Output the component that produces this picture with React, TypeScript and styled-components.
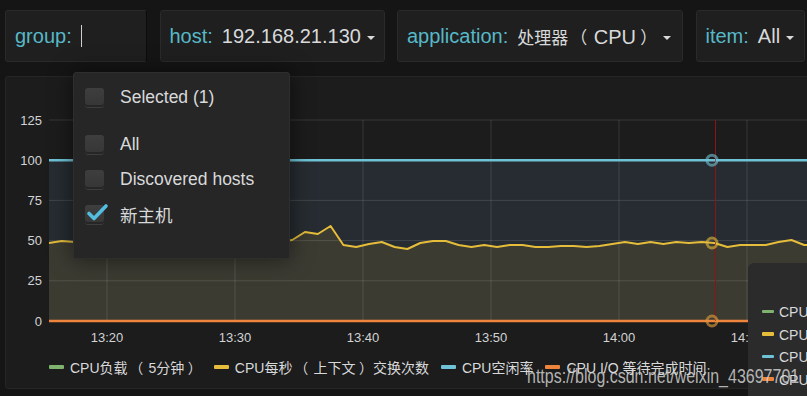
import React from 'react';
import styled, { createGlobalStyle } from 'styled-components';

const GlobalStyle = createGlobalStyle`
  html, body {
    margin: 0;
    padding: 0;
    background: #151515;
    overflow: hidden;
  }
  body {
    font-family: "Liberation Sans", Arial, "Noto Sans CJK SC", sans-serif;
    color: #d8d9da;
  }
`;

const Page = styled.div`
  position: relative;
  width: 807px;
  height: 396px;
  overflow: hidden;
`;

/* full-width brackets get a little air around them, as in YaHei */
const Punct = styled.span<{ $close?: boolean }>`
  font-family: "Noto Sans CJK SC", sans-serif;
  margin: ${(p) => (p.$close ? '0 0 0 0.25em' : '0 0.375em 0 0.125em')};
`;

const withPunct = (text: string) =>
  text.split(/([（）])/).map((part, i) =>
    part === '（' || part === '）' ? (
      <Punct key={i} $close={part === '）'}>
        {part}
      </Punct>
    ) : (
      <React.Fragment key={i}>{part}</React.Fragment>
    ),
  );

/* ---------- template variables bar ---------- */

const VarBar = styled.div`
  display: flex;
  gap: 12.5px;
  padding: 10px 0 0 5px;
  height: 52px;
`;

const VarBox = styled.div<{ $w: number; $focused?: boolean }>`
  position: relative;
  box-sizing: border-box;
  width: ${(p) => p.$w}px;
  flex: none;
  height: 52px;
  display: flex;
  align-items: center;
  padding-left: 9px;
  background: #1f1f1f;
  border: 1px solid #2a2a2a;
  border-right-color: ${(p) => (p.$focused ? '#0c0c0c' : '#2a2a2a')};
  border-radius: 3px;
  font-size: 20px;
  white-space: nowrap;
`;

const VarLabel = styled.span`
  color: #57b8c8;
  margin-right: 9px;
`;

const VarValue = styled.span`
  color: #d8d9da;
`;

const Cjk = styled.span`
  font-family: "Noto Sans CJK SC", sans-serif;
  font-size: 17px;
`;

const Caret = styled.span`
  width: 0;
  height: 0;
  margin: 3px 0 0 6px;
  border-left: 4px solid transparent;
  border-right: 4px solid transparent;
  border-top: 4px solid #d8d9da;
`;

const TextCursor = styled.span`
  width: 1.5px;
  height: 22px;
  background: #cfcfcf;
`;

/* ---------- host options menu ---------- */

const Menu = styled.div`
  position: absolute;
  left: 67px;
  top: 61px;
  z-index: 5;
  box-sizing: border-box;
  width: 217px;
  height: 187px;
  padding: 7px 0 0 11px;
  background: #262627;
  border: 1px solid #2e2e2f;
  border-radius: 3px;
  box-shadow: 0 0 22px rgba(0, 0, 0, 0.55);
  font-size: 17.5px;
`;

const MenuRow = styled.div<{ $gapAfter?: number }>`
  display: flex;
  align-items: center;
  gap: 16px;
  height: 35px;
  margin-bottom: ${(p) => p.$gapAfter ?? 0}px;
  color: #d8d9da;
`;

const CheckBox = styled.span`
  position: relative;
  width: 19px;
  height: 19px;
  flex: none;
  border-radius: 3px;
  background: linear-gradient(#3e3e3f, #363637);
  box-shadow: inset 0 -2px 0 #262627, 0 1px 0 #3d3d3e;
`;

const CheckMark = styled.svg`
  position: absolute;
  left: 2px;
  top: -1px;
  overflow: visible;
`;

/* ---------- graph panel ---------- */

const Panel = styled.div`
  position: relative;
  box-sizing: border-box;
  margin: 14px 0 0 5px;
  width: 830px;
  height: 313px;
  background: #1c1c1c;
  border: 1px solid #262626;
  border-radius: 3px;
`;

const Chart = styled.svg`
  display: block;
  font-family: "Liberation Sans", Arial, sans-serif;
`;

const Legend = styled.div`
  display: flex;
  align-items: center;
  gap: 12px;
  height: 34px;
  padding-left: 43px;
  font-size: 14px;
  white-space: nowrap;
`;

const LegendItem = styled.div`
  display: flex;
  align-items: center;
  gap: 6px;
  color: #d8d9da;
`;

const Swatch = styled.span<{ $color: string; $w?: number }>`
  flex: none;
  width: ${(p) => p.$w ?? 15}px;
  height: 3.5px;
  border-radius: 1px;
  background: ${(p) => p.$color};
`;

const Tooltip = styled.div`
  position: absolute;
  left: 742px;
  top: 186px;
  box-sizing: border-box;
  width: 320px;
  height: 160px;
  padding: 37px 0 0 14px;
  background: #2b2b2c;
  border-radius: 6px;
  font-size: 14px;
  white-space: nowrap;
  z-index: 3;
`;

const TooltipRow = styled.div`
  display: flex;
  align-items: center;
  gap: 5px;
  height: 22.5px;
  color: #d8d9da;
`;

const Watermark = styled.div`
  position: absolute;
  left: 527px;
  top: 366px;
  z-index: 10;
  font-size: 20px;
  line-height: 20px;
  color: rgba(215, 215, 215, 0.82);
  white-space: nowrap;
  transform: scaleX(0.8);
  transform-origin: left center;
`;

/* ---------- data ---------- */

const GREEN = '#7eb26d';
const YELLOW = '#e5bd3a';
const BLUE = '#6ec3d6';
const ORANGE = '#ef843c';

const PLOT_LEFT = 49;
const PLOT_RIGHT = 850;
const PLOT_TOP = 120;
const ZERO_Y = 321;
const yOf = (v: number) => ZERO_Y - v * 1.608;

// context switches per second, one sample per minute
const switchesY = [
  243, 241, 242, 243, 244, 243, 242, 243, 244, 243, 242, 243, 244, 243, 242, 243,
  244, 243, 242, 240, 232, 234, 226, 245, 247, 244, 242, 247, 249, 243, 241, 241,
  245, 247, 245, 247, 245, 245, 247, 247, 246, 246, 247, 246, 244, 242, 244, 242,
  244, 242, 243, 242, 243, 247, 245, 245, 245, 242, 240, 245, 245, 245, 245,
];
const switchesPts = switchesY.map((y, i) => [PLOT_LEFT + 12.8 * i, y] as const);
const lastX = switchesPts[switchesPts.length - 1][0];
const switchesLine = switchesPts.map(([x, y], i) => `${i ? 'L' : 'M'}${x.toFixed(1)},${y}`).join(' ');
const switchesArea = `M${PLOT_LEFT},${ZERO_Y} ${switchesPts
  .map(([x, y]) => `L${x.toFixed(1)},${y}`)
  .join(' ')} L${lastX.toFixed(1)},${ZERO_Y} Z`;

const yTicks = [125, 100, 75, 50, 25, 0];
const xTicks = ['13:20', '13:30', '13:40', '13:50', '14:00', '14:10'];
const xTickPos = (i: number) => 107 + 128 * i;

const legend = [
  { color: GREEN, name: 'CPU负载（5分钟）' },
  { color: YELLOW, name: 'CPU每秒（上下文）交换次数' },
  { color: BLUE, name: 'CPU空闲率' },
  { color: ORANGE, name: 'CPU I/O 等待完成时间' },
];

const hostOptions = [
  { label: 'All', checked: false },
  { label: 'Discovered hosts', checked: false },
  { label: '新主机', checked: true },
];

function Check({ checked }: { checked?: boolean }) {
  return (
    <CheckBox>
      {checked && (
        <CheckMark width="20" height="18" viewBox="0 0 20 18">
          <polyline
            points="2,9.5 7,14.5 19,2"
            fill="none"
            stroke="#52bde0"
            strokeWidth="3.6"
            strokeLinecap="round"
            strokeLinejoin="round"
          />
        </CheckMark>
      )}
    </CheckBox>
  );
}

function GraphSvg() {
  return (
    <Chart width={828} height={273} viewBox="6 77 828 273">
      {/* fills */}
      <rect x={PLOT_LEFT} y={yOf(100)} width={PLOT_RIGHT - PLOT_LEFT} height={ZERO_Y - yOf(100)} fill="#262c31" />
      <path d={switchesArea} fill="#3c3b32" />

      {/* grid */}
      {yTicks.map((t) => (
        <line key={t} x1={PLOT_LEFT} x2={PLOT_RIGHT} y1={yOf(t)} y2={yOf(t)} stroke="rgba(255,255,255,0.12)" strokeWidth={1} />
      ))}
      {xTicks.map((t, i) => (
        <line key={t} x1={xTickPos(i)} x2={xTickPos(i)} y1={PLOT_TOP} y2={ZERO_Y} stroke="rgba(255,255,255,0.12)" strokeWidth={1} />
      ))}

      {/* series */}
      <line x1={PLOT_LEFT} x2={PLOT_RIGHT} y1={yOf(100)} y2={yOf(100)} stroke={BLUE} strokeWidth={2.4} />
      <path d={switchesLine} fill="none" stroke={YELLOW} strokeWidth={2} strokeLinejoin="round" />
      <line x1={PLOT_LEFT} x2={PLOT_RIGHT} y1={ZERO_Y} y2={ZERO_Y} stroke={ORANGE} strokeWidth={2.4} />

      {/* crosshair and hover points */}
      <line x1={715.5} x2={715.5} y1={PLOT_TOP} y2={ZERO_Y} stroke="#8e1414" strokeWidth={1} />
      <circle cx={712} cy={yOf(100)} r={5} fill="none" stroke={BLUE} strokeOpacity={0.6} strokeWidth={3} />
      <circle cx={712} cy={243} r={5} fill="none" stroke={YELLOW} strokeOpacity={0.6} strokeWidth={3} />
      <circle cx={712} cy={ZERO_Y} r={5} fill="none" stroke="#d99a3a" strokeOpacity={0.65} strokeWidth={3} />

      {/* axes */}
      {yTicks.map((t) => (
        <text key={t} x={42} y={yOf(t) + 4.5} fontSize={13} textAnchor="end" fill="#d2d3d4">
          {t}
        </text>
      ))}
      {xTicks.map((t, i) => (
        <text key={t} x={xTickPos(i)} y={341.5} fontSize={13} textAnchor="middle" fill="#d2d3d4">
          {t}
        </text>
      ))}
    </Chart>
  );
}

export default function App() {
  return (
    <>
      <GlobalStyle />
      <Page>
        <VarBar>
          <VarBox $w={142} $focused>
            <VarLabel>group:</VarLabel>
            <TextCursor />
            <Menu>
              <MenuRow $gapAfter={12}>
                <Check />
                <span>Selected (1)</span>
              </MenuRow>
              {hostOptions.map((o) => (
                <MenuRow key={o.label}>
                  <Check checked={o.checked} />
                  <span>{o.label}</span>
                </MenuRow>
              ))}
            </Menu>
          </VarBox>
          <VarBox $w={225}>
            <VarLabel>host:</VarLabel>
            <VarValue>192.168.21.130</VarValue>
            <Caret />
          </VarBox>
          <VarBox $w={286}>
            <VarLabel>application:</VarLabel>
            <VarValue>
              <Cjk>处理器{withPunct('（')}</Cjk>CPU<Cjk>{withPunct('）')}</Cjk>
            </VarValue>
            <Caret />
          </VarBox>
          <VarBox $w={109}>
            <VarLabel>item:</VarLabel>
            <VarValue>All</VarValue>
            <Caret />
          </VarBox>
        </VarBar>

        <Panel>
          <GraphSvg />
          <Legend>
            {legend.map((l) => (
              <LegendItem key={l.name}>
                <Swatch $color={l.color} />
                <span>{withPunct(l.name)}</span>
              </LegendItem>
            ))}
          </Legend>
          <Tooltip>
            {legend.map((l) => (
              <TooltipRow key={l.name}>
                <Swatch $color={l.color} $w={12} />
                <span>{withPunct(l.name)}</span>
              </TooltipRow>
            ))}
          </Tooltip>
        </Panel>

        <Watermark>https://blog.csdn.net/weixin_43697701</Watermark>
      </Page>
    </>
  );
}
